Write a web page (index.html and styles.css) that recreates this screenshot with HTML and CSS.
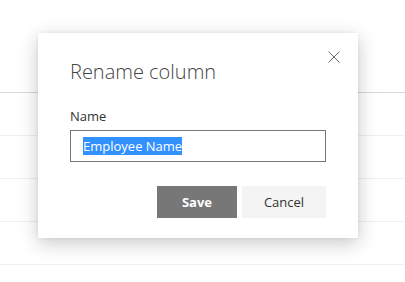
FILE: index.html
```html
<!DOCTYPE html>
<html>
<head>
<meta charset="utf-8">
<link rel="stylesheet" href="styles.css">
</head>
<body>
<div class="list">
  <div class="list-header"></div>
  <div class="list-row"></div>
  <div class="list-row"></div>
  <div class="list-row"></div>
  <div class="list-row"></div>
</div>
<div class="dialog">
  <button class="close" aria-label="Close">
    <svg width="12" height="12" viewBox="0 0 12 12"><path d="M0.5 0.5 L11.5 11.5 M11.5 0.5 L0.5 11.5" stroke="#6a6a6a" stroke-width="1" fill="none"/></svg>
  </button>
  <div class="title">Rename column</div>
  <div class="label">Name</div>
  <div class="field"><span class="selected">Employee Name</span></div>
  <div class="actions">
    <button class="btn btn-save">Save</button>
    <button class="btn btn-cancel">Cancel</button>
  </div>
</div>
</body>
</html>
```

FILE: styles.css
```css
html, body {
  margin: 0;
  padding: 0;
  background: #fff;
  font-family: "Open Sans", "Noto Sans", sans-serif;
}
.list {
  display: flex;
  flex-direction: column;
}
.list-header {
  height: 92px;
  border-bottom: 1px solid #d6d6d6;
}
.list-row {
  height: 42px;
  border-bottom: 1px solid #efefef;
}
.dialog {
  position: absolute;
  left: 38px;
  top: 33px;
  width: 256px;
  padding: 23px 32px 20px 32px;
  background: #fff;
  box-shadow: 0 5px 18px rgba(0,0,0,0.22), 0 0 4px rgba(0,0,0,0.06);
  display: flex;
  flex-direction: column;
}
.close {
  position: absolute;
  top: 18px;
  right: 18px;
  width: 12px;
  height: 12px;
  padding: 0;
  border: 0;
  background: none;
  display: block;
}
.close svg { display: block; }
.title {
  font-size: 20px;
  font-weight: 300;
  line-height: 32px;
  color: #444;
}
.label {
  margin-top: 18px;
  font-size: 13px;
  line-height: 20px;
  color: #333;
}
.field {
  margin-top: 4px;
  height: 30px;
  border: 1px solid #777;
  display: flex;
  align-items: center;
  padding-left: 12px;
}
.selected {
  background: #3390ff;
  color: #fff;
  font-size: 13px;
  line-height: 18px;
}
.actions {
  margin-top: 24px;
  display: flex;
  justify-content: flex-end;
  gap: 5px;
}
.btn {
  height: 32px;
  border: 0;
  font-family: "Open Sans", "Noto Sans", sans-serif;
  font-size: 13px;
  padding: 0;
}
.btn-save {
  width: 80px;
  background: #777;
  color: #fff;
  font-weight: 700;
}
.btn-cancel {
  width: 84px;
  background: #f4f4f4;
  color: #333;
}
```
